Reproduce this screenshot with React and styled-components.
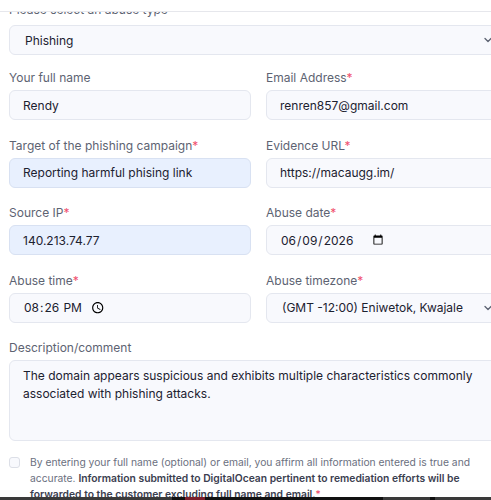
import React from 'react'
import styled, { createGlobalStyle } from 'styled-components'

const GlobalStyle = createGlobalStyle`
  html, body {
    margin: 0;
    padding: 0;
    background: #ffffff;
    overflow: hidden;
  }
  body {
    font-family: Inter, "Noto Sans", sans-serif;
  }
`

const Page = styled.div`
  height: 100vh;
  display: flex;
  flex-direction: column;
`

const TopBar = styled.div`
  height: 11px;
  flex: none;
  background: #ffffff;
  border-bottom: 1px solid #e6e7ec;
  position: relative;
  z-index: 1;
`

const Main = styled.main`
  flex: 1;
  overflow: hidden;
`

const Form = styled.form`
  width: 498px;
  margin: -10px 0 0 9px;
  display: flex;
  flex-direction: column;
`

const Grid = styled.div`
  display: grid;
  grid-template-columns: 242px 1fr;
  column-gap: 15px;
  row-gap: 17.5px;
  margin-top: 15px;
`

const Field = styled.div`
  display: flex;
  flex-direction: column;
  gap: ${({ $gap }) => $gap || 4}px;
  grid-column: ${({ $full }) => ($full ? '1 / -1' : 'auto')};
`

const Label = styled.label`
  font-size: 12px;
  line-height: 16px;
  color: #5d6372;
`

const Star = styled.span`
  color: #f0506e;
`

const controlBase = `
  box-sizing: border-box;
  width: 100%;
  height: 30px;
  border: 1px solid #e4e7ef;
  border-radius: 6px;
  background: #f8f9fd;
  font-family: Inter, "Noto Sans", sans-serif;
  font-size: 12px;
  color: #1c2130;
  padding: 0 13px;
  outline: none;
`

const Input = styled.input`
  ${controlBase}
  background: ${({ $filled }) => ($filled ? '#e8f0fe' : '#f8f9fd')};
  border-color: ${({ $filled }) => ($filled ? '#d8e1f2' : '#e4e7ef')};

  &::-webkit-datetime-edit {
    flex: none;
  }
  &::-webkit-datetime-edit-fields-wrapper {
    padding: 0;
  }
  &::-webkit-calendar-picker-indicator {
    margin-left: ${({ $iconGap }) => $iconGap || 0}px;
    padding: 0;
  }
`

const SelectWrap = styled.div`
  position: relative;
`

const Select = styled.select`
  ${controlBase}
  appearance: none;
  padding: 0 43px 0 15px;

  option {
    color: #1c2130;
  }
`

const Chevron = styled.svg`
  position: absolute;
  right: 14px;
  top: 50%;
  width: 10px;
  height: 10px;
  margin-top: -5px;
  pointer-events: none;
`

const TextArea = styled.textarea`
  ${controlBase}
  height: 81px;
  padding: 6px 13px;
  line-height: 18px;
  resize: none;
`

const Consent = styled.div`
  display: flex;
  gap: 10px;
  margin-top: 13px;
  width: 466px;
`

const Box = styled.input`
  appearance: none;
  flex: none;
  width: 11px;
  height: 11px;
  margin: 3px 0 0;
  border: 1px solid #dcdfe7;
  border-radius: 3px;
  background: #f8f9fd;
`

const ConsentText = styled.p`
  margin: 0;
  font-size: 10.3px;
  line-height: 16px;
  color: #6b7080;

  strong {
    color: #3b4050;
    font-weight: 600;
  }
`

const Taskbar = styled.div`
  height: 3px;
  flex: none;
  display: flex;
  background: #3a3a3a;
`

const TaskSlot = styled.div`
  width: ${({ $w }) => $w}px;
  background: ${({ $c }) => $c};
`

const ChevronIcon = () => (
  <Chevron viewBox="0 0 10 10">
    <path d="M2 3.5 5 6.5 8 3.5" fill="none" stroke="#5d6372" strokeWidth="1.3" strokeLinecap="round" strokeLinejoin="round" />
  </Chevron>
)

const App = () => {
  return (
    <Page>
      <GlobalStyle />
      <TopBar />
      <Main>
        <Form onSubmit={(e) => e.preventDefault()}>
          <Field $full $gap={7}>
            <Label>Please select an abuse type</Label>
            <SelectWrap>
              <Select defaultValue="phishing">
                <option value="phishing">Phishing</option>
                <option value="spam">Spam</option>
                <option value="malware">Malware</option>
              </Select>
              <ChevronIcon />
            </SelectWrap>
          </Field>

          <Grid>
            <Field>
              <Label>Your full name</Label>
              <Input defaultValue="Rendy" />
            </Field>
            <Field>
              <Label>Email Address<Star>*</Star></Label>
              <Input defaultValue="renren857@gmail.com" />
            </Field>

            <Field>
              <Label>Target of the phishing campaign<Star>*</Star></Label>
              <Input $filled defaultValue="Reporting harmful phising link" />
            </Field>
            <Field>
              <Label>Evidence URL<Star>*</Star></Label>
              <Input defaultValue="https://macaugg.im/" />
            </Field>

            <Field>
              <Label>Source IP<Star>*</Star></Label>
              <Input $filled defaultValue="140.213.74.77" />
            </Field>
            <Field>
              <Label>Abuse date<Star>*</Star></Label>
              <Input type="date" $iconGap={-2} defaultValue="2026-06-09" />
            </Field>

            <Field>
              <Label>Abuse time<Star>*</Star></Label>
              <Input type="time" $iconGap={7} defaultValue="20:26" />
            </Field>
            <Field>
              <Label>Abuse timezone<Star>*</Star></Label>
              <SelectWrap>
                <Select defaultValue="-12">
                  <option value="-12">(GMT -12:00) Eniwetok, Kwajalein</option>
                  <option value="-11">(GMT -11:00) Midway Island, Samoa</option>
                </Select>
                <ChevronIcon />
              </SelectWrap>
            </Field>

            <Field $full>
              <Label>Description/comment</Label>
              <TextArea defaultValue="The domain appears suspicious and exhibits multiple characteristics commonly associated with phishing attacks." />
            </Field>
          </Grid>

          <Consent>
            <Box type="checkbox" />
            <ConsentText>
              By entering your full name (optional) or email, you affirm all information entered is true and
              accurate. <strong>Information submitted to DigitalOcean pertinent to remediation efforts will be
              forwarded to the customer excluding full name and email.</strong><Star>*</Star>
            </ConsentText>
          </Consent>
        </Form>
      </Main>
      <Taskbar>
        <TaskSlot $w={172} $c="#3a3a3a" />
        <TaskSlot $w={13} $c="#111111" />
        <TaskSlot $w={20} $c="#7a1f2b" />
        <TaskSlot $w={178} $c="#111111" />
        <TaskSlot $w={47} $c="#3a3a3a" />
        <TaskSlot $w={5} $c="#111111" />
      </Taskbar>
    </Page>
  )
}

export default App
